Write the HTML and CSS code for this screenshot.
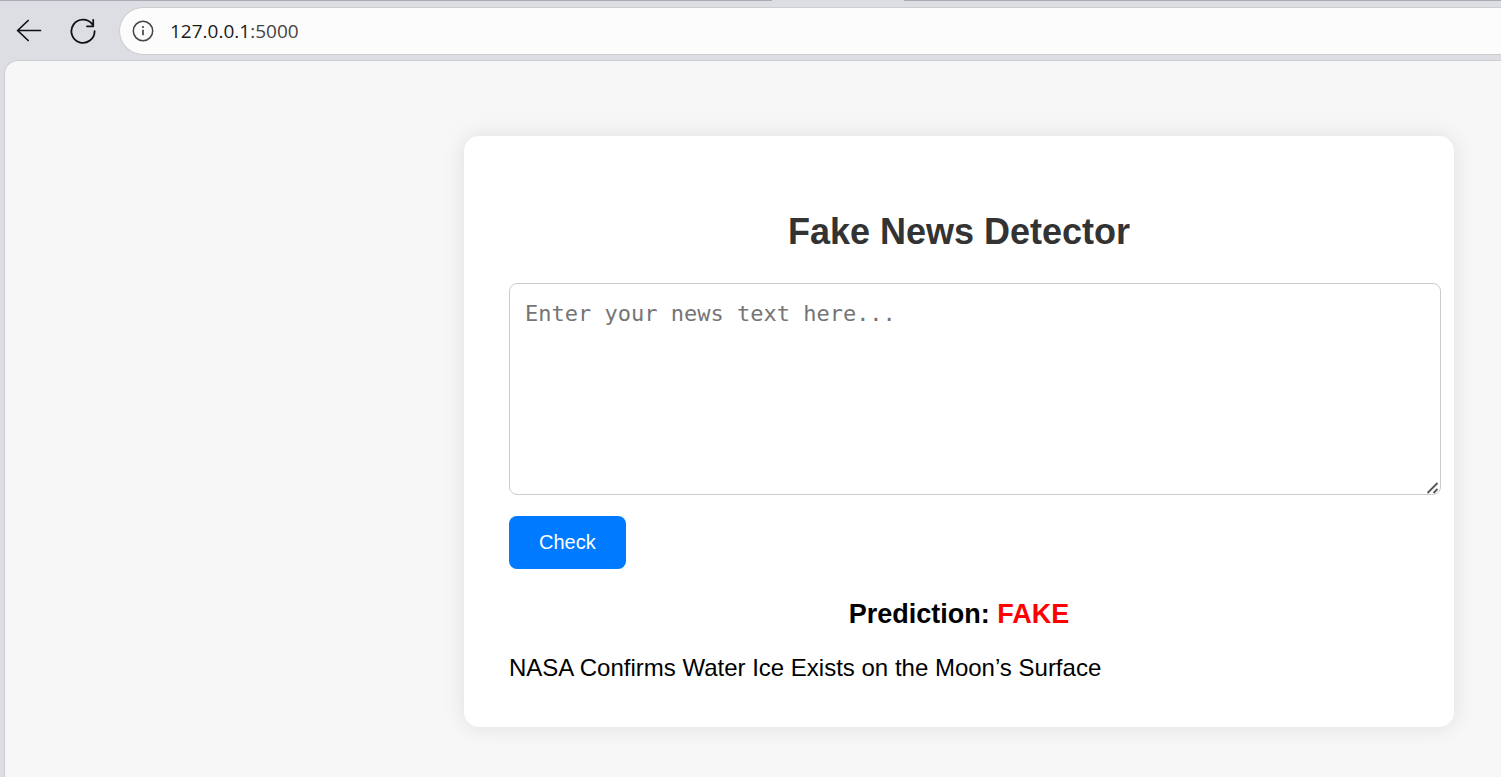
FILE: index.html
```html
<!DOCTYPE html>
<html lang="en">
<head>
<meta charset="utf-8">
<title>Fake News Detector</title>
<link rel="stylesheet" href="styles.css">
</head>
<body>
<div class="tab-edge"><span class="active-tab"></span></div>
<header class="toolbar">
  <button class="nav-button" type="button" aria-label="Back">
    <svg width="28" height="28" viewBox="0 0 28 28" fill="none" stroke="#111" stroke-width="1.7" stroke-linecap="round" stroke-linejoin="round"><path d="M25.5 13.5H2.6M13.2 3.5L2.6 13.5L13.2 23.5"/></svg>
  </button>
  <button class="nav-button" type="button" aria-label="Refresh">
    <svg width="28" height="28" viewBox="0 0 28 28" fill="none" stroke="#111" stroke-width="1.8" stroke-linecap="round" stroke-linejoin="round"><path d="M25.6 14.2A11.6 11.6 0 1 1 23.2 7.2M24.2 2.8V9.3H18"/></svg>
  </button>
  <div class="address">
    <svg width="22" height="22" viewBox="0 0 22 22" fill="none" stroke="#444" stroke-width="1.5"><circle cx="11" cy="11" r="9.7"/><path d="M11 9.7V15.3" stroke-width="1.7"/><circle cx="11" cy="7" r="1.1" fill="#444" stroke="none"/></svg>
    <span class="url">127.0.0.1<span class="port">:5000</span></span>
  </div>
</header>
<main class="page">
  <section class="card">
    <h1 class="title">Fake News Detector</h1>
    <form class="form">
      <div class="field">
        <textarea class="news" aria-label="News text" placeholder="Enter your news text here..."></textarea>
        <svg class="grip" width="14" height="14" viewBox="0 0 14 14" fill="none" stroke="#555" stroke-width="1.8"><path d="M1.5 12L11.5 2M7.5 12L11.5 8"/></svg>
      </div>
      <button class="check" type="button">Check</button>
    </form>
    <h2 class="prediction">Prediction: <span class="fake">FAKE</span></h2>
    <p class="headline">NASA Confirms Water Ice Exists on the Moon’s Surface</p>
  </section>
</main>
</body>
</html>
```
FILE: styles.css
```css
body {
  margin: 0;
  min-height: 100vh;
  display: flex;
  flex-direction: column;
  background: #dddee3;
  color: #000;
  font-family: "Liberation Sans", Arial, sans-serif;
}
.tab-edge {
  display: flex;
  justify-content: flex-end;
  height: 1px;
  background: #a9adb6;
}
.active-tab {
  width: 132px;
  margin-right: 597px;
  background: #dddee3;
}
.toolbar {
  display: flex;
  align-items: center;
  padding: 6px 0 5px 2px;
}
.nav-button {
  display: flex;
  align-items: center;
  justify-content: center;
  width: 54px;
  height: 46px;
  padding: 0;
  border: 0;
  background: none;
}
.address {
  flex: 1;
  display: flex;
  align-items: center;
  gap: 16px;
  height: 46px;
  margin-left: 9px;
  padding-left: 12px;
  border: 1px solid #cdced0;
  border-right: 0;
  border-radius: 24px 0 0 24px;
  background: #fcfcfc;
}
.url {
  font: 19px/26px "Open Sans", "Noto Sans", sans-serif;
  color: #1b1b1b;
}
.port {
  color: #444;
}
.page {
  flex: 1;
  margin-left: 4px;
  padding: 75px 47px 50px;
  border: 1px solid #cdced3;
  border-width: 1px 0 0 1px;
  border-radius: 14px 0 0 0;
  background: #f7f7f7;
}
.card {
  box-sizing: border-box;
  max-width: 990px;
  margin-left: auto;
  padding: 75px 45px 45px;
  border-radius: 15px;
  background: #fff;
  box-shadow: 0 0 22px rgba(0, 0, 0, 0.1);
}
.title {
  margin: 0 0 31px;
  font-size: 36px;
  line-height: 41px;
  text-align: center;
  color: #333;
}
.form {
  display: flex;
  flex-direction: column;
  align-items: flex-start;
  gap: 21px;
}
.field {
  display: flex;
  position: relative;
  width: calc(100% + 32px);
}
.news {
  flex: 1;
  height: 180px;
  margin: 0;
  padding: 15px;
  border: 1px solid #ccc;
  border-radius: 8px;
  background: #fff;
  font: 22px/30px "DejaVu Sans Mono", monospace;
  resize: none;
}
.news::placeholder {
  color: #757575;
}
.grip {
  position: absolute;
  right: 1px;
  bottom: 0;
  pointer-events: none;
}
.check {
  padding: 15px 30px;
  border: 0;
  border-radius: 8px;
  background: #007bff;
  color: #fff;
  font: 20px/23px "Liberation Sans", Arial, sans-serif;
}
.prediction {
  margin: 29px 0 24px;
  font-size: 27px;
  line-height: 32px;
  text-align: center;
}
.fake {
  color: #f00;
}
.headline {
  margin: 0;
  font-size: 24px;
  line-height: 28px;
}
```
